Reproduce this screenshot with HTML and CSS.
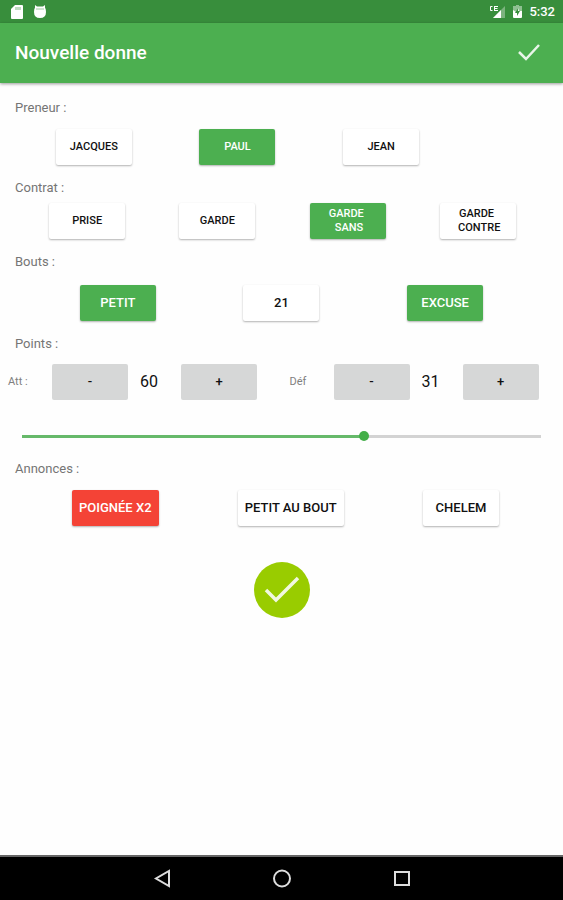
FILE: index.html
```html
<!DOCTYPE html>
<html lang="fr">
<head>
<meta charset="utf-8">
<meta name="viewport" content="width=device-width, initial-scale=1">
<title>Nouvelle donne</title>
<link rel="stylesheet" href="styles.css">
</head>
<body>
	<div class="status">
		<svg class="ico-sd" width="14" height="14" viewBox="0 0 14 14"><path fill="#fff" d="M5 0h7q1 0 1 1v12q0 1-1 1H2q-1 0-1-1V4z"/><path stroke="#81b884" d="M6 2v3M8 2v3M10 2v3"/></svg>
		<svg width="14" height="14" viewBox="0 0 14 14"><path fill="#fff" d="M2 0l2 1.500h6L12 0v2.500Q13 4 13 7q0 6-6 6T1 7q0-3 1-4.500z"/><path stroke="#9ccc9e" d="M3 4h8"/></svg>
		<span class="space"></span>
		<svg width="17" height="14" viewBox="0 0 17 14"><path fill="#7cb37e" d="M16 1v12H4z"/><path fill="#fff" d="M12 5v8H4z"/><path fill="none" stroke="#fff" d="M3.500 1.500h-2v4h2M5.500 1v5M9 1.500H6M8.500 3.500H6M9 5.500H6"/></svg>
		<svg class="ico-bat" width="11" height="14" viewBox="0 0 11 14"><path fill="#8fc091" d="M3 1h1V0h3v1h3v6H1V1z"/><path fill="#fff" d="M1 5l3 2 2-4 1 3h3v6q0 1-1 1H2q-1 0-1-1z"/><path fill="#388e3c" d="M6 3L3 8h2v3l3-5H6z"/></svg>
		<span class="clock">5:32</span>
	</div>

	<header class="bar">
		<h1>Nouvelle donne</h1>
		<button class="ok" type="button" aria-label="Valider">
			<svg width="24" height="20" viewBox="0 0 24 20"><path fill="none" stroke="#e8f5e9" stroke-width="2.500" d="M2 9l7 7L22 2"/></svg>
		</button>
	</header>

	<main>
		<h2 id="preneur">Preneur :</h2>
		<div class="row preneur" role="group" aria-labelledby="preneur">
			<button class="btn small" type="button" aria-pressed="false">JACQUES</button>
			<button class="btn small on" type="button" aria-pressed="true">PAUL</button>
			<button class="btn small" type="button" aria-pressed="false">JEAN</button>
		</div>

		<h2 id="contrat">Contrat :</h2>
		<div class="row contrat" role="group" aria-labelledby="contrat">
			<button class="btn small" type="button" aria-pressed="false">PRISE</button>
			<button class="btn small" type="button" aria-pressed="false">GARDE</button>
			<button class="btn small on" type="button" aria-pressed="true">GARDE 
 SANS</button>
			<button class="btn small" type="button" aria-pressed="false">GARDE 
 CONTRE</button>
		</div>

		<h2 id="bouts">Bouts :</h2>
		<div class="row bouts" role="group" aria-labelledby="bouts">
			<button class="btn on" type="button" aria-pressed="true">PETIT</button>
			<button class="btn" type="button" aria-pressed="false">21</button>
			<button class="btn on" type="button" aria-pressed="true">EXCUSE</button>
		</div>

		<h2 id="points">Points :</h2>
		<div class="points" role="group" aria-labelledby="points">
			<div class="score">
				<span class="camp">Att :</span>
				<button class="btn grey" type="button">-</button>
				<output>60</output>
				<button class="btn grey" type="button">+</button>
			</div>
			<div class="score">
				<span class="camp">Déf</span>
				<button class="btn grey" type="button">-</button>
				<output>31</output>
				<button class="btn grey" type="button">+</button>
			</div>
		</div>
		<input class="slider" type="range" min="0" max="91" value="60" aria-labelledby="points" style="--fill:65.9%">

		<h2 id="annonces">Annonces :</h2>
		<div class="row annonces" role="group" aria-labelledby="annonces">
			<button class="btn red" type="button" aria-pressed="true">POIGNÉE X2</button>
			<button class="btn" type="button" aria-pressed="false">PETIT AU BOUT</button>
			<button class="btn" type="button" aria-pressed="false">CHELEM</button>
		</div>

		<button class="fab" type="button" aria-label="Enregistrer la donne">
			<svg width="38" height="28" viewBox="0 0 38 28"><path fill="none" stroke="#f1f8e0" stroke-width="3.500" d="M3 14l10 10L35 2"/></svg>
		</button>
	</main>

	<nav class="nav">
		<button type="button" aria-label="Retour"><svg width="20" height="20" viewBox="0 0 20 20"><path d="M17 2v15L4 9.500z"/></svg></button>
		<button type="button" aria-label="Accueil"><svg width="20" height="20" viewBox="0 0 20 20"><circle cx="10" cy="9.500" r="8"/></svg></button>
		<button type="button" aria-label="Applications"><svg width="20" height="20" viewBox="0 0 20 20"><path d="M3 3h14v13H3z"/></svg></button>
	</nav>
</body>
</html>
```
FILE: styles.css
```css
*{margin:0;padding:0;box-sizing:border-box;}
body{min-height:100vh;display:flex;flex-direction:column;background:#fefefe;font-family:Roboto,"Liberation Sans",sans-serif;color:#111;}
button{border:0;background:none;font-family:inherit;cursor:pointer;}
svg{display:block;}

/* barre d'état */
.status{display:flex;align-items:center;height:23px;padding:0 8px 0 10px;background:#388e3c;color:#fff;}
.ico-sd{margin-right:9px;}
.space{flex:1;}
.ico-bat{margin:0 6px;}
.clock{font-size:13px;font-weight:500;line-height:16px;}

.bar{display:flex;align-items:center;justify-content:space-between;height:60px;padding:0 22px 0 15px;background:#4caf50;box-shadow:0 1px 3px rgba(0,0,0,.4);}
.bar h1{font-size:19px;font-weight:500;line-height:24px;color:#fff;}

main{flex:1;padding:17px 0 24px;}
h2{padding-left:15px;font-size:13px;font-weight:400;line-height:16px;color:#757575;}

.row{display:grid;justify-items:center;margin-bottom:15px;}
.preneur{grid-template-columns:repeat(3,1fr);margin-top:13px;padding:0 110px 0 22px;}
.contrat{grid-template-columns:repeat(4,1fr);margin-top:7px;padding:0 20px 0 22px;}
.bouts{grid-template-columns:repeat(3,1fr);margin-top:15px;padding:0 36px;}
.annonces{display:flex;justify-content:space-between;margin-top:13px;padding:0 64px 0 72px;}

.btn{min-width:76px;height:36px;padding:0 7px;border-radius:2px;background:#fff;color:#111;font-size:13px;font-weight:500;line-height:14px;white-space:pre;box-shadow:0 1px 2px rgba(0,0,0,.3);}
.small{font-size:11px;}
.on{background:#4caf50;color:#fff;}
.red{background:#f44336;color:#fff;}
.grey{background:#d6d7d7;box-shadow:none;}

.points{display:grid;grid-template-columns:1fr 1fr;margin-top:12px;}
.score{display:grid;grid-template-columns:44px 76px 53px 76px;align-items:center;padding-left:8px;}
.camp{font-size:11px;line-height:16px;color:#808080;}
.score output{padding-left:12px;font-size:16px;line-height:20px;}

.slider{display:block;width:calc(100% - 34px);height:20px;margin:26px 17px 15px;-webkit-appearance:none;appearance:none;background:linear-gradient(to right,#66b96a var(--fill),#d3d3d3 var(--fill)) center/calc(100% - 10px) 3px no-repeat;}
.slider::-webkit-slider-thumb{-webkit-appearance:none;width:10px;height:10px;border-radius:50%;background:#43ae48;}

.fab{display:flex;align-items:center;justify-content:center;width:56px;height:56px;margin:36px auto 0;border-radius:50%;background:#9c0;}

.nav{display:flex;align-items:center;justify-content:center;gap:100px;height:45px;border-top:2px solid #666;background:#000;}
.nav path,.nav circle{fill:none;stroke:#ddd;stroke-width:2;}
```
